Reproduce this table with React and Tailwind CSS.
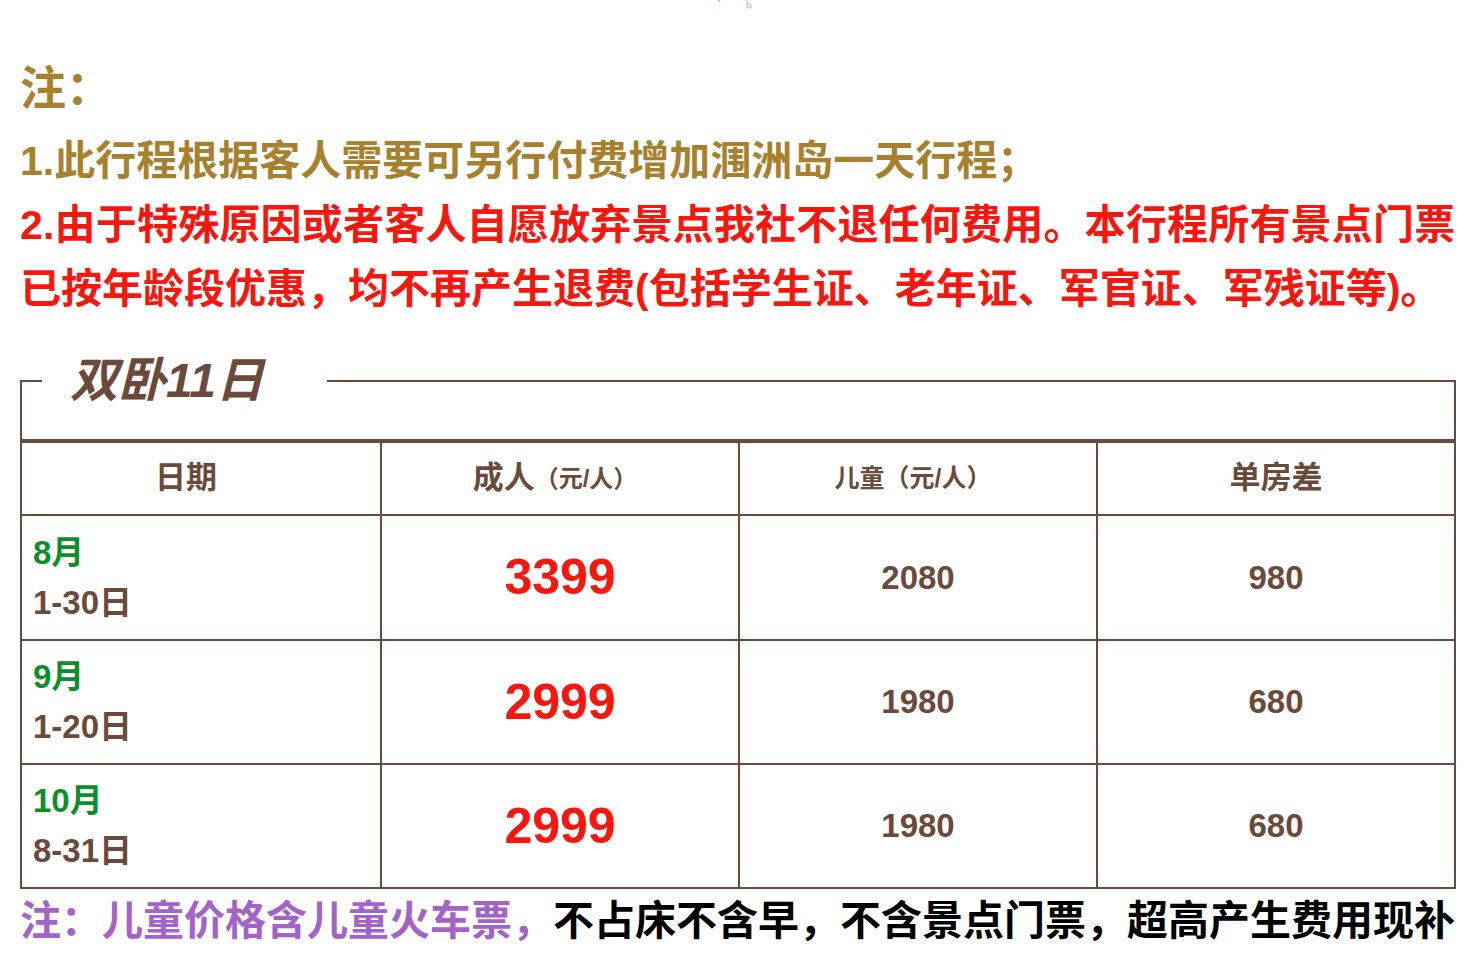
import React from 'react'

const FONT = '[font-family:"Liberation_Sans","Noto_Sans_CJK_SC",sans-serif]'

const rows = [
  { month: '8月', days: '1-30日', adult: '3399', child: '2080', single: '980', h: 'h-[125px]' },
  { month: '9月', days: '1-20日', adult: '2999', child: '1980', single: '680', h: 'h-[124px]' },
  { month: '10月', days: '8-31日', adult: '2999', child: '1980', single: '680', h: 'h-[124px]' },
]

const App = () => {
  return (
    <div className={`w-[1468px] h-[966px] overflow-hidden bg-white font-bold ${FONT}`}>
      {/* decoration cut off at the top */}
      <div className="h-[56px]">
        <svg width="40" height="10" viewBox="0 0 40 10" className="ml-[714px]">
          <path d="M4 0 Q5 3 6 0" stroke="#a8d8f5" strokeWidth="1.5" fill="none" />
          <path d="M33 0 L33 6 Q33 8 35 8 Q37 8 37 6 Q37 4 34 4" stroke="#a8d8f5" strokeWidth="1.5" fill="none" />
        </svg>
      </div>

      {/* notes */}
      <div className="pl-[20px]">
        <p className="text-[46px] leading-[64px] text-[#a8812f]">注：</p>
        <p className="mt-[9px] text-[41px] leading-[64px] text-[#a8812f] whitespace-nowrap">
          1.此行程根据客人需要可另行付费增加涠洲岛一天行程；
        </p>
        <p className="text-[41px] leading-[64px] text-[#f7170f] whitespace-nowrap tracking-[0.2px]">
          2.由于特殊原因或者客人自愿放弃景点我社不退任何费用。本行程所有景点门票
        </p>
        <p className="text-[41px] leading-[64px] text-[#f7170f] whitespace-nowrap">
          已按年龄段优惠，均不再产生退费(包括学生证、老年证、军官证、军残证等)。
        </p>
      </div>

      {/* price box */}
      <fieldset className="mt-[30px] ml-[20px] w-[1436px] border-2 border-[#6b4a3c]">
        <legend className="ml-[20px] pl-[28px] pr-[63px] text-[48px] leading-[60px] italic text-[#6b4a3c]">
          双卧11日
        </legend>
        <div className="h-[28px]" />

        <div className="grid grid-cols-4 h-[75px] border-t-4 border-[#6b4a3c] text-[#6b4a3c]">
          <div className="flex items-center justify-center pr-[30px] text-[31px]">日期</div>
          <div className="flex items-center justify-center pr-[10px] border-l-2 border-[#6b4a3c]">
            <span className="text-[31px]">成人</span>
            <span className="text-[24px]">（元/人）</span>
          </div>
          <div className="flex items-center justify-center pr-[10px] border-l-2 border-[#6b4a3c] text-[25px]">
            儿童（元/人）
          </div>
          <div className="flex items-center justify-center border-l-2 border-[#6b4a3c] text-[31px]">单房差</div>
        </div>

        {rows.map((r, i) => (
          <div key={i} className={`grid grid-cols-4 ${r.h} border-t-2 border-[#6b4a3c]`}>
            <div className="flex flex-col justify-center pl-[11px] text-[33px] leading-[50px]">
              <span className="text-[#0b8f2b]">{r.month}</span>
              <span className="text-[#6b4a3c]">{r.days}</span>
            </div>
            <div className="flex items-center justify-center border-l-2 border-[#6b4a3c] text-[50px] text-[#f7170f]">
              {r.adult}
            </div>
            <div className="flex items-center justify-center border-l-2 border-[#6b4a3c] text-[33px] text-[#6b4a3c]">
              {r.child}
            </div>
            <div className="flex items-center justify-center border-l-2 border-[#6b4a3c] text-[33px] text-[#6b4a3c]">
              {r.single}
            </div>
          </div>
        ))}
      </fieldset>

      {/* bottom note */}
      <p className="pl-[20px] text-[41px] leading-[64px] whitespace-nowrap">
        <span className="text-[#a463c8]">注：儿童价格含儿童火车票，</span>
        <span className="text-black">不占床不含早，不含景点门票，超高产生费用现补</span>
      </p>
    </div>
  )
}

export default App
